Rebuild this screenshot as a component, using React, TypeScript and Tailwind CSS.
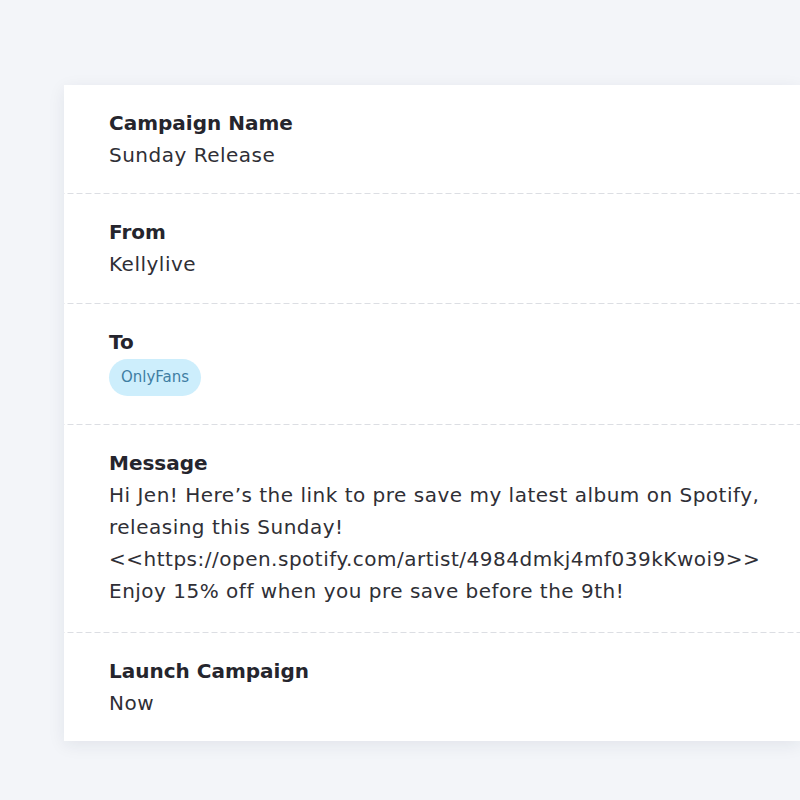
import React from "react";

const font = { fontFamily: '"DejaVu Sans", "Noto Sans", sans-serif' };

function Section({ label, children, last, pb }: { label: string; children: React.ReactNode; last?: boolean; pb?: string }) {
  return (
    <div
      className={`pl-[45px] pr-4 pt-[22px] ${pb ?? "pb-[24px]"} ${
        last
          ? ""
          : "bg-[linear-gradient(to_right,#dcdee3_6px,transparent_6px)] bg-[length:9px_1px] bg-repeat-x bg-bottom"
      }`}
    >
      <div className="text-[20px] leading-[32px] font-semibold text-[#25252d]">{label}</div>
      {children}
    </div>
  );
}

const body = "text-[20px] leading-[32px] tracking-[0.5px] text-[#2f2f36]";

export default function App() {
  return (
    <div className="w-[800px] h-[800px] bg-[#f3f5f9] pt-[85px] pl-[64px] overflow-hidden" style={font}>
      <div className="bg-white w-[736px] shadow-[0_4px_16px_rgba(30,40,60,0.08)]">
        <Section label="Campaign Name" pb="pb-[23px]">
          <div className={body}>Sunday Release</div>
        </Section>
        <Section label="From">
          <div className={body}>Kellylive</div>
        </Section>
        <Section label="To" pb="pb-[29px]">
          <div className="pt-[1px]">
            <span className="inline-flex items-center h-[37px] px-[12px] rounded-full bg-[#cdeefc] text-[15px] text-[#3f7ea3]">OnlyFans</span>
          </div>
        </Section>
        <Section label="Message" pb="pb-[26px]">
          <div className={body}>
            <div>Hi Jen! Here’s the link to pre save my latest album on Spotify,</div>
            <div>releasing this Sunday!</div>
            <div>{"<<https://open.spotify.com/artist/4984dmkj4mf039kKwoi9>>"}</div>
            <div>Enjoy 15% off when you pre save before the 9th!</div>
          </div>
        </Section>
        <Section label="Launch Campaign" last pb="pb-[22px]">
          <div className={body}>Now</div>
        </Section>
      </div>
    </div>
  );
}
